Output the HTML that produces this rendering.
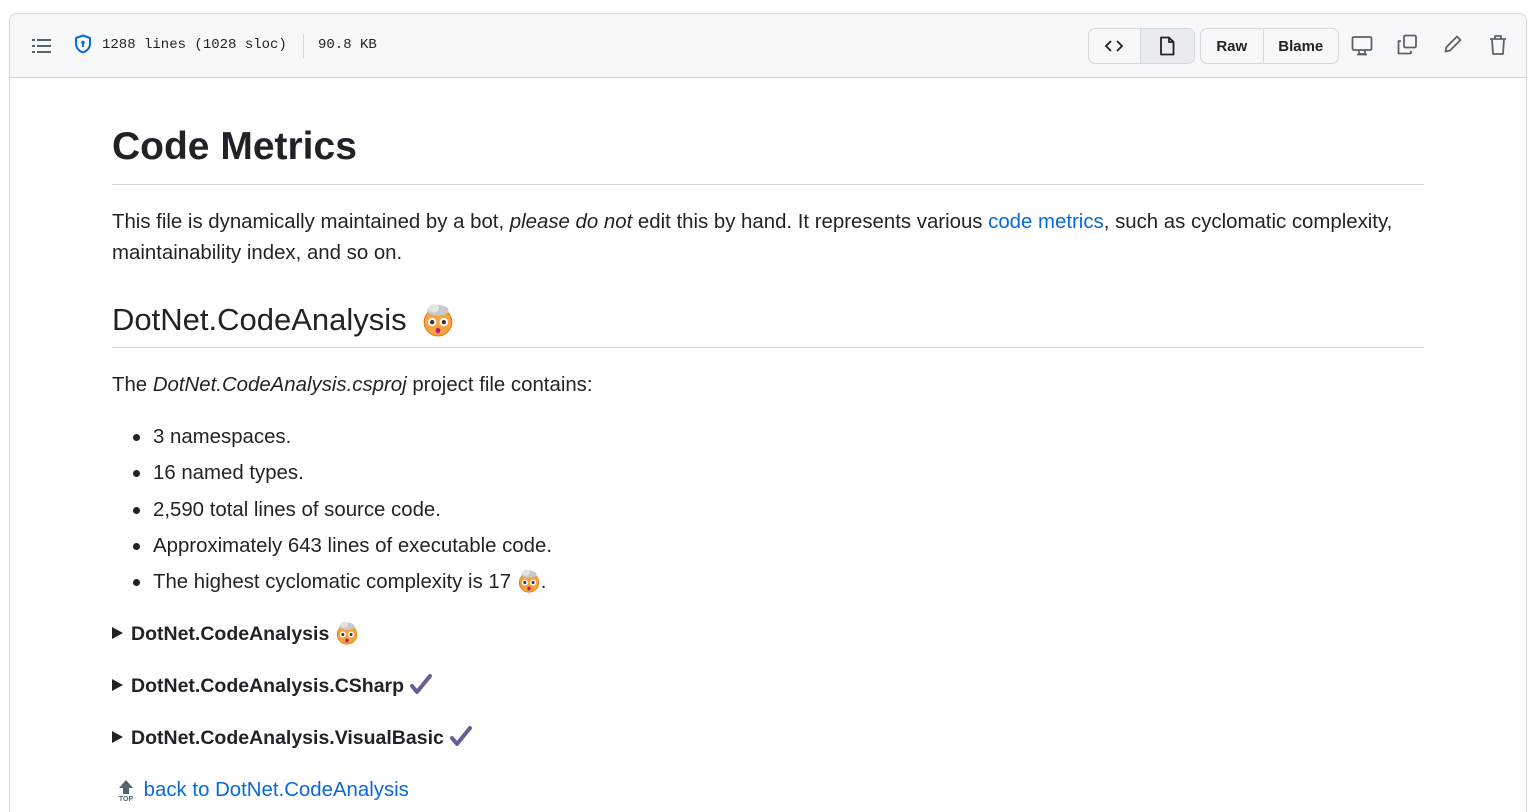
<!DOCTYPE html>
<html style="height:812px;overflow:hidden"><head><meta charset="utf-8"><style>
*{margin:0;padding:0;box-sizing:border-box}
body{width:1536px;height:812px;background:#fff;font-family:"Liberation Sans",sans-serif;color:#1f2328;position:relative;overflow:hidden}
.box{position:absolute;left:9px;top:13px;width:1518px;height:820px;border:1px solid #d1d9e0;border-radius:8px}
.hdr{position:absolute;left:0;top:0;right:0;height:64px;background:#f6f8fa;border-bottom:1px solid #d1d9e0;border-radius:8px 8px 0 0}
.a{position:absolute;white-space:nowrap}
.mono{font-family:"Liberation Mono",monospace;font-size:14px;color:#1f2328}
.btn{position:absolute;top:14px;height:36px;border:1px solid #d1d9e0;border-radius:7px;background:#f6f8fa;display:flex;overflow:hidden}
.btn div{display:flex;align-items:center;justify-content:center;font-size:15px;font-weight:bold;color:#1f2328}
.t{font-size:20.4px;line-height:31px}
a{color:#0969da;text-decoration:none}
.li::before{content:"";position:absolute;left:-20px;top:12px;width:7px;height:7px;border-radius:50%;background:#1f2328}
.tri{display:inline-block;width:0;height:0;border-left:11px solid #1f2328;border-top:6px solid transparent;border-bottom:6px solid transparent;margin-right:8px;vertical-align:1px}
.d{font-weight:bold;font-size:19.5px}
</style></head><body>
<svg width="0" height="0" style="position:absolute"><defs>
<symbol id="em" viewBox="0 0 32 32"><circle cx="16" cy="18" r="13" fill="#f7a23b"/><circle cx="16" cy="18" r="13" fill="none" stroke="#e07a1f" stroke-width="1"/><ellipse cx="16" cy="7" rx="10" ry="5" fill="#c8c8c8"/><ellipse cx="12" cy="5" rx="5" ry="4" fill="#e4e4e4"/><circle cx="10.5" cy="18" r="4" fill="#fff"/><circle cx="21.5" cy="18" r="4" fill="#fff"/><circle cx="10.5" cy="18" r="2" fill="#402a32"/><circle cx="21.5" cy="18" r="2" fill="#402a32"/><ellipse cx="16" cy="26" rx="2.2" ry="2.6" fill="#bb1d80"/></symbol>
<symbol id="ck" viewBox="0 0 24 24"><path d="M3 13l5 6L21 3" fill="none" stroke="#6b5b95" stroke-width="4" stroke-linecap="round" stroke-linejoin="round"/></symbol>
</defs></svg>
<div class="box"><div class="hdr">
<svg class="a" style="left:22px;top:23px" width="20" height="18" viewBox="0 0 20 18" fill="#59636e"><rect x="0" y="2" width="3" height="2"/><rect x="0" y="8" width="3" height="2"/><rect x="0" y="14" width="3" height="2"/><rect x="5" y="2" width="14" height="2"/><rect x="5" y="8" width="14" height="2"/><rect x="5" y="14" width="14" height="2"/></svg>
<svg class="a" style="left:64px;top:20px" width="18" height="20" viewBox="0 0 18 20"><path d="M9 1.5L16 4v5.5c0 4.5-3.2 7.5-7 9-3.8-1.5-7-4.5-7-9V4z" fill="none" stroke="#0969da" stroke-width="2" stroke-linejoin="round"/><circle cx="9" cy="8.5" r="1.8" fill="#0969da"/><rect x="8.1" y="9" width="1.8" height="4" fill="#0969da"/></svg>
<div class="a mono" style="left:92px;top:23px">1288 lines (1028 sloc)</div>
<div class="a" style="left:293px;top:20px;width:1px;height:24px;background:#d1d9e0"></div>
<div class="a mono" style="left:308px;top:23px">90.8 KB</div>
<div class="btn" style="left:1078px;width:107px"><div style="width:52px;border-right:1px solid #d1d9e0"><svg width="20" height="16" viewBox="0 0 20 16" fill="none" stroke="#1f2328" stroke-width="1.8"><path d="M7 3L2 8l5 5M13 3l5 5-5 5"/></svg></div><div style="width:54px;background:#e9ecef"><svg width="16" height="20" viewBox="0 0 16 20" fill="none" stroke="#1f2328" stroke-width="1.8" stroke-linejoin="round"><path d="M2 1.5h8l4.5 4.5v12.5H2zM10 1.5V6h4.5"/></svg></div></div>
<div class="btn" style="left:1190px;width:139px"><div style="width:63px;border-right:1px solid #d1d9e0">Raw</div><div style="width:75px">Blame</div></div>
<svg class="a" style="left:1341px;top:21px" width="22" height="22" viewBox="0 0 22 22" fill="none" stroke="#59636e" stroke-width="1.8" stroke-linejoin="round"><rect x="1.5" y="2" width="19" height="13" rx="1.5"/><path d="M8 15v4h6v-4M6 19.5h10"/></svg>
<svg class="a" style="left:1386px;top:20px" width="22" height="22" viewBox="0 0 22 22" fill="none" stroke="#59636e" stroke-width="1.8" stroke-linejoin="round"><rect x="8" y="1.5" width="12" height="12" rx="1.5"/><path d="M5 7H2.5v12.5H15V17"/></svg>
<svg class="a" style="left:1433px;top:20px" width="20" height="22" viewBox="0 0 20 22" fill="none" stroke="#59636e" stroke-width="1.8" stroke-linejoin="round"><path d="M14 2.5l3.5 3.5L7 16.5l-4.5 1 1-4.5z"/></svg>
<svg class="a" style="left:1478px;top:20px" width="20" height="22" viewBox="0 0 20 22" fill="none" stroke="#59636e" stroke-width="1.8" stroke-linejoin="round"><path d="M2 5h16M7 5V2h6v3M4 5l1 15h10l1-15"/></svg>
</div></div>

<div class="a" style="left:112px;top:125px;font-size:39px;font-weight:bold">Code Metrics</div>
<div class="a" style="left:112px;top:184px;width:1312px;height:1px;background:#d1d9e0"></div>
<div class="a t" style="left:112px;top:207px">This file is dynamically maintained by a bot, <i>please do not</i> edit this by hand. It represents various <a>code metrics</a>, such as cyclomatic complexity,<br>maintainability index, and so on.</div>
<div class="a" style="left:112px;top:302px;font-size:31px">DotNet.CodeAnalysis <svg width="34" height="34" style="vertical-align:-7px;margin-left:6px"><use href="#em"/></svg></div>
<div class="a" style="left:112px;top:347px;width:1312px;height:1px;background:#d1d9e0"></div>
<div class="a t" style="left:112px;top:370px">The <i>DotNet.CodeAnalysis.csproj</i> project file contains:</div>
<div class="a t li" style="left:153px;top:422px">3 namespaces.</div>
<div class="a t li" style="left:153px;top:458px">16 named types.</div>
<div class="a t li" style="left:153px;top:495px">2,590 total lines of source code.</div>
<div class="a t li" style="left:153px;top:531px">Approximately 643 lines of executable code.</div>
<div class="a t li" style="left:153px;top:567px">The highest cyclomatic complexity is 17 <svg width="24" height="24" style="vertical-align:-5px"><use href="#em"/></svg>.</div>
<div class="a t d" style="left:112px;top:619px"><span class="tri"></span>DotNet.CodeAnalysis <svg width="24" height="24" style="vertical-align:-5px"><use href="#em"/></svg></div>
<div class="a t d" style="left:112px;top:671px"><span class="tri"></span>DotNet.CodeAnalysis.CSharp <svg width="24" height="24" style="vertical-align:-5px"><use href="#ck"/></svg></div>
<div class="a t d" style="left:112px;top:723px"><span class="tri"></span>DotNet.CodeAnalysis.VisualBasic <svg width="24" height="24" style="vertical-align:-5px"><use href="#ck"/></svg></div>
<div class="a t" style="left:116px;top:775px"><svg width="22" height="24" viewBox="0 0 22 24" style="vertical-align:-6px"><path d="M10 2L3 10h4v6h6v-6h4z" fill="#59636e"/><text x="10" y="23" font-size="7" font-family="Liberation Sans" font-weight="bold" text-anchor="middle" fill="#59636e">TOP</text></svg> <a>back to DotNet.CodeAnalysis</a></div>
</body></html>
